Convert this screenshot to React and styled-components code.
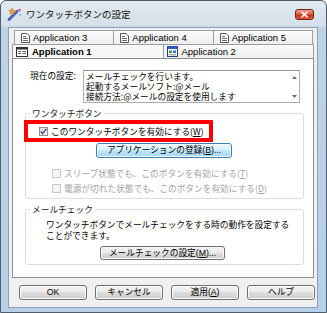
import React from 'react';
import styled, { createGlobalStyle } from 'styled-components';

const GlobalStyle = createGlobalStyle`
  html, body {
    margin: 0;
    padding: 0;
    background: #ffffff;
  }

  body {
    font-family: "Liberation Sans", "Noto Sans CJK JP", sans-serif;
    font-size: 8.7px;
    color: #000;
  }

  * {
    box-sizing: border-box;
  }
`;

const Window = styled.div`
  width: 327px;
  height: 313px;
  display: flex;
  flex-direction: column;
  border: 1px solid #4f5d6c;
  border-radius: 6px 6px 0 0;
  background: linear-gradient(to bottom, #e2e9f0 0, #d5e0ea 24px, #bdd3e8 28px, #b6d0ea 100%);
  overflow: hidden;
`;

const TitleBar = styled.div`
  height: 26px;
  flex: none;
  display: flex;
  align-items: center;
  gap: 3px;
  padding: 0 12px 0 6px;
`;

const TitleText = styled.span`
  font-family: "Noto Sans CJK JP", sans-serif;
  font-size: 9.5px;
  line-height: 12px;
  color: #111;
`;

const CloseButton = styled.div`
  margin-left: auto;
  width: 19px;
  height: 11px;
  border: 1px solid #6e2218;
  border-radius: 3px;
  background: linear-gradient(to bottom, #efa08e 0, #dc6047 45%, #c5321a 55%, #de5c3d 100%);
  display: flex;
  align-items: center;
  justify-content: center;
`;

const Client = styled.div`
  flex: 1;
  display: flex;
  flex-direction: column;
  margin: 0 8px 4px 7px;
  padding: 2px 3px 0 3px;
  border: 1px solid #8aa0b7;
  background: #f0f0f0;
`;

const TabRow = styled.div`
  height: 14px;
  display: flex;
  margin: ${({ $back }) => ($back ? '0 1px 0 2px' : '0')};
`;

const Tab = styled.div`
  flex: 1;
  display: flex;
  align-items: center;
  gap: ${({ $back }) => ($back ? '3px' : '4px')};
  padding-left: ${({ $back }) => ($back ? '6px' : '3px')};
  border: 1px solid #9a9da4;
  border-bottom: none;
  margin-left: -1px;
  background: ${({ $selected }) =>
    $selected ? '#f7f7f7' : 'linear-gradient(to bottom, #fcfcfc, #eeeeee)'};
  font-family: "Liberation Sans", sans-serif;
  font-size: 9.5px;
  font-weight: ${({ $selected }) => ($selected ? 'bold' : 'normal')};
  line-height: 12px;

  &:first-child {
    margin-left: 0;
  }
`;

const Panel = styled.div`
  height: 220px;
  flex: none;
  display: flex;
  flex-direction: column;
  padding: 0 9px 0 12px;
  border: 1px solid #898c95;
  background: #ffffff;
`;

const SettingRow = styled.div`
  display: flex;
  align-items: flex-start;
  margin: 11px 4px 0 5px;
`;

const SettingLabel = styled.span`
  width: 53px;
  flex: none;
  padding-top: 1px;
  line-height: 10px;
  font-family: "Noto Sans CJK JP", sans-serif;
`;

const InfoBox = styled.div`
  flex: 1;
  height: 33px;
  display: flex;
  border: 1px solid #abadb3;
  border-top-color: #8e9299;
`;

const InfoText = styled.div`
  flex: 1;
  padding: 1px 0 0 2px;
  line-height: 10px;
  font-family: "Noto Sans CJK JP", sans-serif;
  white-space: nowrap;
`;

const ScrollColumn = styled.div`
  width: 10px;
  display: flex;
  flex-direction: column;
  justify-content: space-between;
  align-items: center;
  padding: 5px 0 4px;
`;

const Group = styled.fieldset`
  margin: ${({ $gap }) => `${$gap}px 0 0 0`};
  padding: ${({ $bottom }) => `0 0 ${$bottom}px 0`};
  border: 1px solid #d5dfe5;
  border-radius: 3px;
  min-width: 0;
`;

const Legend = styled.legend`
  margin-left: 4px;
  padding: 0 2px;
  line-height: 11px;
  font-family: "Noto Sans CJK JP", sans-serif;
  color: #1a1a1a;
`;

const Highlight = styled.div`
  width: 189px;
  height: 22px;
  margin: 1px 0 0 -2px;
  padding-left: 11px;
  border: 4px solid #ff0000;
  display: flex;
  align-items: center;
`;

const CheckRow = styled.label`
  display: flex;
  align-items: center;
  gap: 3px;
  height: 15px;
  margin-left: ${({ $indent }) => `${$indent}px`};
  margin-top: ${({ $top }) => `${$top || 0}px`};
  font-family: "Noto Sans CJK JP", sans-serif;
  line-height: 11px;
  white-space: nowrap;
  color: ${({ $disabled }) => ($disabled ? '#a3a3a3' : '#000')};
`;

const CheckBox = styled.span`
  width: 9px;
  height: 9px;
  flex: none;
  display: flex;
  align-items: center;
  justify-content: center;
  border: 1px solid ${({ $disabled }) => ($disabled ? '#c9c9c9' : '#8e8f8f')};
  background: ${({ $disabled }) =>
    $disabled ? '#f4f4f4' : 'linear-gradient(135deg, #d9d9d9, #fbfbfb)'};
`;

const Button = styled.div`
  width: ${({ $w }) => `${$w}px`};
  height: ${({ $h }) => `${$h || 15}px`};
  margin: ${({ $m }) => $m || '0'};
  flex: none;
  display: flex;
  align-items: center;
  justify-content: center;
  border: 1px solid ${({ $hot }) => ($hot ? '#3c7fb1' : '#707070')};
  border-radius: 3px;
  box-shadow: inset 0 0 0 1px ${({ $hot }) => ($hot ? '#f4fbff' : '#fbfbfb')};
  background: ${({ $hot }) =>
    $hot
      ? 'linear-gradient(to bottom, #eaf6fd 0, #d9f0fc 50%, #bee6fd 50%, #a7d9f5 100%)'
      : 'linear-gradient(to bottom, #f2f2f2 0, #ebebeb 50%, #dddddd 50%, #cfcfcf 100%)'};
  font-family: "Liberation Sans", "Noto Sans CJK JP", sans-serif;
  line-height: 11px;
  white-space: nowrap;
`;

const Description = styled.p`
  margin: 4px 0 0 20px;
  line-height: 11px;
  font-family: "Noto Sans CJK JP", sans-serif;
  white-space: nowrap;
`;

const Key = styled.u`
  text-decoration: underline;
`;

const ButtonRow = styled.div`
  display: flex;
  gap: 8px;
  margin-top: 7px;
  padding-left: 7px;
`;

const AppIcon = () => (
  <svg width="16" height="14" viewBox="0 0 16 14">
    <path d="M2 12.5 L10 4.5" stroke="#2f4fa8" strokeWidth="2.6" strokeLinecap="round" />
    <path d="M2.4 12.1 L9.6 4.9" stroke="#8fb0f0" strokeWidth="0.8" strokeLinecap="round" />
    <path
      d="M5 1 L5.9 3.3 L8.3 3.4 L6.4 4.9 L7.1 7.2 L5 5.9 L2.9 7.2 L3.6 4.9 L1.7 3.4 L4.1 3.3 Z"
      fill="#f2a31b"
      stroke="#c86a0a"
      strokeWidth="0.5"
    />
    <circle cx="12.5" cy="3" r="1.3" fill="#e24b8a" />
    <circle cx="13" cy="8" r="1" fill="#5bc0eb" />
  </svg>
);

const CloseGlyph = () => (
  <svg width="9" height="7" viewBox="0 0 9 7">
    <path d="M1.5 0.8 L7.5 6.2 M7.5 0.8 L1.5 6.2" stroke="#ffffff" strokeWidth="1.6" />
  </svg>
);

const PageIcon = () => (
  <svg width="9" height="10" viewBox="0 0 9 10">
    <path d="M0.5 0.5 H6 L8.5 3 V9.5 H0.5 Z" fill="#ffffff" stroke="#555" />
    <path d="M2 3.5 H5 M2 5.5 H7 M2 7.5 H7" stroke="#555" strokeWidth="0.9" />
  </svg>
);

const WindowIcon = () => (
  <svg width="12" height="10" viewBox="0 0 12 10">
    <rect x="0.5" y="0.5" width="11" height="9" fill="#ffffff" stroke="#333" />
    <rect x="0.5" y="0.5" width="11" height="2" fill="#333" />
    <path d="M2 4.5 H5 M6.5 4.5 H10 M2 6.5 H5 M6.5 6.5 H10" stroke="#555" strokeWidth="0.9" />
  </svg>
);

const ColorIcon = () => (
  <svg width="11" height="11" viewBox="0 0 11 11">
    <rect x="0.5" y="0.5" width="10" height="10" fill="#ffffff" stroke="#1f3f8f" />
    <rect x="0.5" y="0.5" width="10" height="2.5" fill="#2d5cc7" />
    <rect x="2" y="4.5" width="3" height="2.5" fill="#3aa34a" />
    <rect x="6" y="4.5" width="3" height="2.5" fill="#3a6fd0" />
    <path d="M2 8.8 H9" stroke="#666" strokeWidth="0.8" />
  </svg>
);

const CheckMark = () => (
  <svg width="7" height="7" viewBox="0 0 7 7">
    <path d="M0.8 3.6 L2.7 5.6 L6.3 0.9" fill="none" stroke="#3c4f8a" strokeWidth="1.5" />
  </svg>
);

const Arrow = ({ up }) => (
  <svg width="5" height="3" viewBox="0 0 5 3">
    <path d={up ? 'M0 3 L2.5 0 L5 3 Z' : 'M0 0 L2.5 3 L5 0 Z'} fill="#6d6d6d" />
  </svg>
);

const backTabs = ['Application 3', 'Application 4', 'Application 5'];

const App = () => (
  <>
    <GlobalStyle />
    <Window>
      <TitleBar>
        <AppIcon />
        <TitleText>ワンタッチボタンの設定</TitleText>
        <CloseButton>
          <CloseGlyph />
        </CloseButton>
      </TitleBar>
      <Client>
        <TabRow $back>
          {backTabs.map((name) => (
            <Tab $back key={name}>
              <PageIcon />
              {name}
            </Tab>
          ))}
        </TabRow>
        <TabRow>
          <Tab $selected>
            <WindowIcon />
            Application 1
          </Tab>
          <Tab>
            <ColorIcon />
            Application 2
          </Tab>
        </TabRow>
        <Panel>
          <SettingRow>
            <SettingLabel>現在の設定:</SettingLabel>
            <InfoBox>
              <InfoText>
                メールチェックを行います。
                <br />
                起動するメールソフト:@メール
                <br />
                接続方法:@メールの設定を使用します
              </InfoText>
              <ScrollColumn>
                <Arrow up />
                <Arrow />
              </ScrollColumn>
            </InfoBox>
          </SettingRow>
          <Group $gap={5} $bottom={2}>
            <Legend>ワンタッチボタン</Legend>
            <Highlight>
              <CheckRow $indent={0}>
                <CheckBox>
                  <CheckMark />
                </CheckBox>
                <span>
                  このワンタッチボタンを有効にする(<Key>W</Key>)
                </span>
              </CheckRow>
            </Highlight>
            <Button $hot $w={136} $m="1px 0 0 70px">
              <span>
                アプリケーションの登録(<Key>B</Key>)...
              </span>
            </Button>
            <CheckRow $disabled $indent={26} $top={8}>
              <CheckBox $disabled />
              <span>
                スリープ状態でも、このボタンを有効にする(<Key>T</Key>)
              </span>
            </CheckRow>
            <CheckRow $disabled $indent={26}>
              <CheckBox $disabled />
              <span>
                電源が切れた状態でも、このボタンを有効にする(<Key>D</Key>)
              </span>
            </CheckRow>
          </Group>
          <Group $gap={5} $bottom={4}>
            <Legend>メールチェック</Legend>
            <Description>
              ワンタッチボタンでメールチェックをする時の動作を設定する
              <br />
              ことができます。
            </Description>
            <Button $w={125} $h={14} $m="5px 0 0 74px">
              <span>
                メールチェックの設定(<Key>M</Key>)...
              </span>
            </Button>
          </Group>
        </Panel>
        <ButtonRow>
          <Button $w={68}>OK</Button>
          <Button $w={68}>キャンセル</Button>
          <Button $w={68}>
            <span>
              適用(<Key>A</Key>)
            </span>
          </Button>
          <Button $w={68}>ヘルプ</Button>
        </ButtonRow>
      </Client>
    </Window>
  </>
);

export default App;
